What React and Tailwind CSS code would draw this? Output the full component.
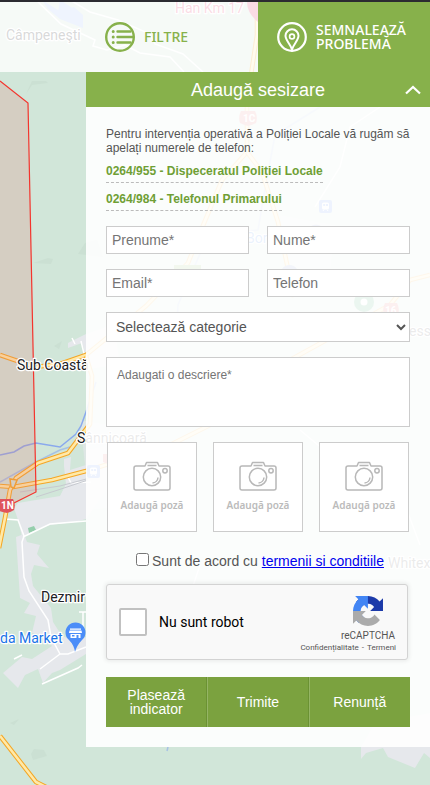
import React from "react";

const label = "font-['Roboto',sans-serif] text-[14px]";

function Road({ d }) {
  return (
    <>
      <path d={d} fill="none" stroke="#f5a623" strokeWidth="4.600" strokeLinejoin="round" />
      <path d={d} fill="none" stroke="#ffe9a8" strokeWidth="2.600" strokeLinejoin="round" />
    </>
  );
}

function TrainStop({ x, y }) {
  return (
    <g transform={`translate(${x} ${y})`}>
      <rect width="13" height="13" rx="2" fill="#3f7cf0" />
      <rect x="3" y="2.500" width="7" height="7" rx="1.500" fill="#fff" />
      <path d="M4.200 4h2v2h-2zM7 4h2v2H7z" fill="#3f7cf0" />
      <path d="M4 11l1-1.500M9 11l-1-1.500" stroke="#fff" />
    </g>
  );
}

function MapBackground() {
  return (
    <svg
      className="absolute inset-0 h-full w-full"
      viewBox="0 0 430 785"
      preserveAspectRatio="xMinYMin slice"
      aria-hidden="true"
    >
      <rect width="430" height="785" fill="#d1e6d9" />
      <path d="M42 0l19 12 13-5 9 8v13L60 19 48 9zM60 0l23 15v12L58 13z" fill="#adc8fa" />
      <g fill="#cbe0d3">
        <path d="M26 94l6-13h14l2 2-16 2zM33 263l15-5 5 1-2 5zM78 254l7-11 12-3 6 17zM31 754l3-5 10 1 3 6-14 4zM10 723l9-4-5 6zM54 346l8-5-3 8z" />
      </g>
      <g fill="#e6e8ec">
        <path d="M64 459l7-2-1 13 16-5v-15l20-4v45l-20 28-11 3-25 3-12 4-16 8-4-17-4-12 4-5 42-7 6-12-2-18z" />
        <path d="M16 537l8-3 3 8 13 3-3 9 12 14-15-3-3 9 2 12 18 22 2 14 9 14 13 5 11-4v17l-26 16-8 3-9 10-5-14-13 6-7 13L3 673l19-16 10 2 20-13-8-10-12-3 4-17-12-3 6-10-10-5z" />
        <path d="M68 343l18-9 28-10 6 40-30 5-8-26-14 5z" />
        <path d="M80 420l60 10-5 75-45 5zM280 215l55 10-5 50-40 20z" fillOpacity=".6" />
        <path d="M361 747v12l5-6 17-5 5 9 27 11 9-15 6 5v-45l-55 10z" />
      </g>
      <path d="M28 528l6-2 2 4-7 3z" fill="#95ceac" />
      <g fill="none" stroke="#fff" strokeWidth="1.500">
        <path d="M36 0l25 24 34 16-2 6 14 4 18-5 15 8 30 4 14 15M70 0l20 12 28 8 32 14 5 10 28 10 20 18" />
        <path d="M5 519l13 1 6 16-2 6 2 35 5 14 19 29 3 17 9 17 8 0 18-7M23 537l27-13 36-3M60 654l-20 15M42 684l36-16 4-3M79 612h7M83 630v-18M14 659l8-4" />
        <path d="M67 475l4 8 20-1M81 341l4 17M75 344l-3-6" />
        <path d="M380 107l-30 20-10 40-25 40M300 430l24 20M405 505l15 40M200 565l-20 60" />
      </g>
      <g fill="none" stroke="#8aa9ed" strokeWidth="1.500">
        <path d="M0 455l14-3 10-6 12-3 24 4 16-13 5-8 5-14 10-30" />
        <path d="M0 482l36-20 24-12 10-3" strokeOpacity=".6" />
        <path d="M320 107l-45 28-12 65-5 30-50 5-30 70-2 35M168 747l-1 4" strokeOpacity=".6" />
      </g>
      <path d="M36 497l22-7 30-10M20 492l40-6 30-8" fill="none" stroke="#c7cad0" />
      <Road d="M247 107v45l-25 28-20 48-14 35-42 43-60 49-26 9-25 3-35-12" />
      <Road d="M247 152l15 20 16 50 16 75" />
      <Road d="M430 275l-20 5-20 25-100 55-60 55-60 30-84 26-34 9-39 7-13-1" />
      <Road d="M86 356l6 20-2 48-22 29-30 10-22 15-6 12-5 28-6 30" />
      <Road d="M0 736l36 46 12 6M257 0v35l-6 40" />
      <path d="M11 487l-1-8 7 1-3 8z" fill="#d1e6d9" stroke="#f5a623" strokeWidth="1.500" />
      <path d="M0 81l28 22 8 389-36 18z" fill="#e0837a" fillOpacity=".24" />
      <path d="M0 81l28 22 8 389-36 18" fill="none" stroke="#f4342d" strokeWidth="1.200" />
      <path d="M-1 499h14q3 5 1 11-3 2-7 3-4-1-8-2z" fill="#df535c" />
      <text x="1" y="509" className="fill-white font-['Roboto',sans-serif] text-[10px] font-bold">1N</text>
      <path d="M241 111h14q3 6 1 12-4 2-8 3-4-1-8-3-2-6 1-12z" fill="#df535c" />
      <text x="243" y="122" className="fill-white font-['Roboto',sans-serif] text-[10px] font-bold">1C</text>
      <path d="M385 303h12q3 6 1 12h-14q-2-6 1-12z" fill="#df535c" />
      <text x="385" y="314" className="fill-white font-['Roboto',sans-serif] text-[10px] font-bold">16</text>
      <path d="M247 2h11v20q-11-9-11-20z" fill="#e8507b" />
      <path d="M103 462v-8h5v10z" fill="#df535c" />
      <rect x="174" y="265" width="27" height="7" fill="#7fae4a" />
      <circle cx="364" cy="302" r="10" fill="#1f9a56" />
      <circle cx="364" cy="302" r="3.500" fill="#fff" />
      <path d="M309 228a9 9 0 0 1 14 0zM282 269a9 9 0 0 1 15 0z" fill="#7b95cf" />
      <TrainStop x={319} y={200} />
      <TrainStop x={87} y={465} />
      <path d="M75 652q-1-7-6-12a10 10 0 1 1 13 0q-5 5-7 12z" fill="#4b8df8" />
      <path d="M70 628.500h11v1.200H70zM69.500 630.500h12l.5 2.500h-13zM70.500 634h10v4h-10z" fill="#fff" />
      <path d="M76.500 635h2v3h-2zM72 635h2.500v1.500H72z" fill="#4b8df8" />
      <g stroke="#fff" strokeWidth="2.500" strokeLinejoin="round" paintOrder="stroke" fill="#202124" className={label}>
        <text x="6" y="40" fill="#3c4043">Câmpeneşti</text>
        <text x="175" y="13" fill="#e8507b">Han Km 17</text>
        <text x="17" y="370">Sub Coastă</text>
        <text x="77" y="443">Sânnicoară</text>
        <text x="41" y="602">Dezmir</text>
        <text x="0" y="643" fill="#1a73e8">da Market</text>
        <text x="388" y="568">Whitex</text>
        <text x="246" y="243" fill="#1a73e8">Bor</text>
        <text x="409" y="336">ess</text>
      </g>
    </svg>
  );
}

function FilterIcon() {
  return (
    <svg width="30" height="30" viewBox="0 0 30 30" fill="none" stroke="#87b14b" strokeLinecap="round" aria-hidden="true">
      <circle cx="15" cy="15" r="13.800" strokeWidth="2.400" />
      <path d="M12.500 9.500h13M12.500 15h15M12.500 20.500h13" strokeWidth="2.400" />
      <path d="M8.200 9.500h.01M8.200 15h.01M8.200 20.500h.01" strokeWidth="3" />
    </svg>
  );
}

function PinIcon() {
  return (
    <svg width="30" height="30" viewBox="0 0 30 30" fill="none" stroke="#fff" aria-hidden="true">
      <circle cx="15" cy="15" r="13.800" strokeWidth="2.200" />
      <path d="M15 27.500C13.500 22 8.500 18.500 8.500 13.800a6.500 6.500 0 0 1 13 0C21.500 18.500 16.500 22 15 27.500z" strokeWidth="2" />
      <circle cx="15" cy="14.500" r="2.400" strokeWidth="1.700" />
    </svg>
  );
}

function CameraIcon() {
  return (
    <svg width="38" height="32" viewBox="0 0 38 32" fill="none" stroke="#b8b8b8" strokeWidth="1.500" strokeLinejoin="round" aria-hidden="true">
      <path d="M3 6h9l1.500-3.500h11L26 6h9a2 2 0 0 1 2 2v20a2 2 0 0 1-2 2H3a2 2 0 0 1-2-2V8a2 2 0 0 1 2-2z" />
      <circle cx="19" cy="17" r="8.700" />
      <path d="M25 17.500a6 6 0 0 1-5.500 5.500M14.500 5.500h9" />
      <circle cx="32" cy="10.800" r="2.200" />
    </svg>
  );
}

function RecaptchaLogo() {
  return (
    <svg width="30" height="30" viewBox="0 0 64 64" aria-hidden="true">
      <path fill="#1c3aa9" d="M64 31.955l-.033-1.370V4.687l-7.160 7.160C50.948 4.674 42.033.093 32.050.093c-10.400 0-19.622 4.960-25.458 12.640l11.736 11.860a15.550 15.550 0 0 1 4.754-5.334c2.050-1.600 4.952-2.906 8.968-2.906.485 0 .86.057 1.135.163 4.976.393 9.288 3.140 11.828 7.124l-8.307 8.307L64 31.953" />
      <path fill="#4285f4" d="M31.862.094l-1.370.033H4.594l7.160 7.160C4.580 13.147 0 22.060 0 32.046c0 10.400 4.960 19.622 12.640 25.458L24.500 45.768a15.550 15.550 0 0 1-5.334-4.754c-1.600-2.050-2.906-4.952-2.906-8.968 0-.485.057-.86.163-1.135.393-4.976 3.140-9.288 7.124-11.828l8.307 8.307L31.860.095" />
      <path fill="#ababab" d="M.001 32.045l.033 1.370v25.898l7.160-7.160c5.860 7.173 14.774 11.754 24.760 11.754 10.400 0 19.622-4.960 25.458-12.640l-11.736-11.860a15.550 15.550 0 0 1-4.754 5.334c-2.050 1.600-4.952 2.906-8.968 2.906-.485 0-.86-.057-1.135-.163-4.976-.393-9.288-3.140-11.828-7.124l8.307-8.307-27.297-.01" />
    </svg>
  );
}

const field =
  "h-7 w-full min-w-0 rounded-none border border-[#ccc] bg-white px-[5px] text-[14px] text-[#555] placeholder:text-[#757575]";
const phone =
  "border-b border-dashed border-[#bbb] pb-1 text-[12px] leading-[14px] font-bold text-[#6f9f35]";
const action =
  "flex items-center justify-center px-2 text-center text-[14px] leading-[14px] text-white";
const navText = "font-['Noto_Sans',sans-serif] text-[14px] leading-[14px] font-medium";

export default function App() {
  return (
    <div className="relative min-h-screen overflow-hidden bg-[#d1e6d9] font-['Liberation_Sans',Arial,sans-serif]">
      <MapBackground />
      <div className="relative">
        <nav className="flex h-[72px] border-t-2 border-[#2b2b31]">
          <button type="button" className="flex w-3/5 items-center gap-[9px] bg-white/80 pl-[105px] text-[#87b14b]">
            <FilterIcon />
            <span className={navText}>FILTRE</span>
          </button>
          <button type="button" className="flex w-2/5 items-center gap-[9px] bg-[#87b14b] pl-[19px] text-left text-white">
            <PinIcon />
            <span className={navText}>
              SEMNALEAZĂ
              <br />
              PROBLEMĂ
            </span>
          </button>
        </nav>

        <main className="ml-auto w-4/5 bg-white/91">
          <header className="grid h-[35px] grid-cols-[1fr_auto_1fr] items-center bg-[#87b14b] px-2 text-white">
            <h1 className="col-start-2 text-[18px] leading-5">Adaugă sesizare</h1>
            <button type="button" aria-label="Închide" className="justify-self-end">
              <svg width="18" height="12" viewBox="0 0 18 12" fill="none" stroke="#fff" strokeWidth="2.200" aria-hidden="true">
                <path d="M2 9.500l7-6.500 7 6.500" />
              </svg>
            </button>
          </header>

          <form className="flex flex-col gap-[15px] p-5" onSubmit={(e) => e.preventDefault()}>
            <div className="flex flex-col items-start gap-[9px] text-[12px] leading-[14px] text-[#555]">
              <p>Pentru intervenția operativă a Poliției Locale vă rugăm să apelați numerele de telefon:</p>
              <a href="tel:0264955" className={phone}>0264/955 - Dispeceratul Poliției Locale</a>
              <a href="tel:0264984" className={phone}>0264/984 - Telefonul Primarului</a>
            </div>

            <div className="grid grid-cols-2 gap-x-[18px] gap-y-[15px]">
              <input className={field} type="text" placeholder="Prenume*" aria-label="Prenume" />
              <input className={field} type="text" placeholder="Nume*" aria-label="Nume" />
              <input className={field} type="email" placeholder="Email*" aria-label="Email" />
              <input className={field} type="tel" placeholder="Telefon" aria-label="Telefon" />
            </div>

            <select aria-label="Categorie" className="h-[30px] w-full rounded-none border border-[#ccc] bg-white px-[5px] text-[14px] text-[#555]">
              <option>Selectează categorie</option>
            </select>

            <textarea
              aria-label="Descriere"
              placeholder="Adaugati o descriere*"
              className="block h-[70px] w-full resize-none border border-[#ccc] bg-white p-[10px] text-[12px] leading-[14px] text-[#555] placeholder:text-[#757575]"
            />

            <div className="flex justify-between px-px">
              {[1, 2, 3].map((n) => (
                <button
                  key={n}
                  type="button"
                  className="flex h-[90px] w-[90px] flex-col items-center justify-center gap-1 border border-[#ccc] bg-white"
                >
                  <CameraIcon />
                  <span className="font-['Noto_Sans',sans-serif] text-[10px] leading-[18px] font-semibold text-[#bbb]">Adaugă poză</span>
                </button>
              ))}
            </div>

            <div className="flex items-center justify-center py-[6px] text-[14px] leading-4 text-[#555]">
              <input id="terms" type="checkbox" className="mr-[3px] mb-[3px] ml-1 h-[13px] w-[13px]" />
              <label htmlFor="terms">
                Sunt de acord cu <a href="#termeni" className="text-[#0000ee] underline">termenii si conditiile</a>
              </label>
            </div>

            <div className="mr-[2px] mb-[2px] -mt-[6px] flex h-[76px] items-center justify-between rounded-[3px] border border-[#d3d3d3] bg-[#f9f9f9] pr-[11px] pl-3 font-['Roboto',sans-serif] shadow-[0_0_4px_1px_rgba(0,0,0,0.08)]">
              <div className="flex items-center gap-3">
                <input id="robot" type="checkbox" className="h-7 w-7 appearance-none rounded-[2px] border-2 border-[#c1c1c1] bg-white" />
                <label htmlFor="robot" className="text-[14px] leading-[17px] text-black">Nu sunt robot</label>
              </div>
              <div className="flex flex-col items-end pt-[5px] text-[#555]">
                <div className="flex flex-col items-center gap-[5px] pr-px">
                  <RecaptchaLogo />
                  <span className="text-[10px] leading-[10px]">reCAPTCHA</span>
                </div>
                <div className="mt-[2px] flex gap-[3px] text-[8px] leading-[10px]">
                  <a href="#confidentialitate">Confidențialitate</a>
                  <span>-</span>
                  <a href="#termeni-recaptcha">Termeni</a>
                </div>
              </div>
            </div>

            <div className="grid h-[50px] grid-cols-3 bg-[#7ba23f]">
              <button type="button" className={`${action} border-r border-[#6b9233]`}>
                Plasează
                <br />
                indicator
              </button>
              <button type="submit" className={`${action} border-x border-l-[#95b565] border-r-[#6b9233]`}>Trimite</button>
              <button type="button" className={`${action} border-l border-[#95b565]`}>Renunță</button>
            </div>
          </form>
        </main>
      </div>
    </div>
  );
}
